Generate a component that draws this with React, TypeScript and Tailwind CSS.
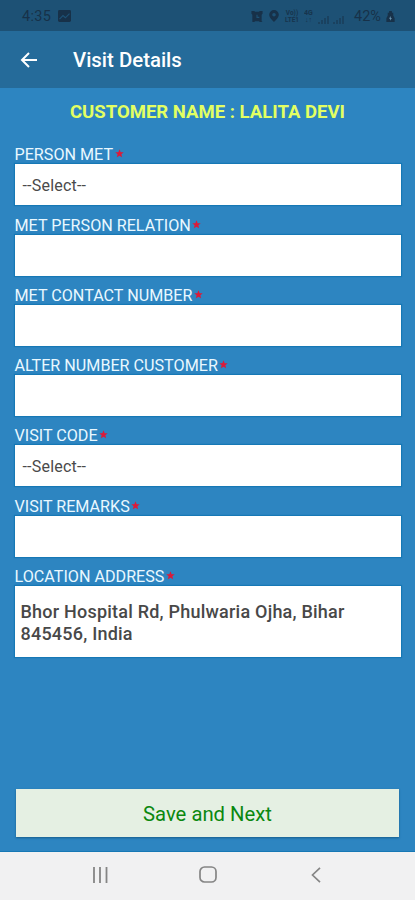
import React from 'react';

interface FieldProps {
  label: string;
  value?: string;
}

const FIELDS: FieldProps[] = [
  { label: 'PERSON MET', value: '--Select--' },
  { label: 'MET PERSON RELATION' },
  { label: 'MET CONTACT NUMBER' },
  { label: 'ALTER NUMBER CUSTOMER' },
  { label: 'VISIT CODE', value: '--Select--' },
  { label: 'VISIT REMARKS' },
];

const FieldLabel: React.FC<{ label: string }> = ({ label }) => (
  <div className="flex h-[29.3px] items-end text-[16.15px] leading-[18px] whitespace-nowrap text-[#e9f8ff]">
    <span>{label}</span>
    <svg viewBox="0 0 10 10" className="mb-[6px] ml-[1.5px] h-[9px] w-[9px] fill-[#dc1a38]">
      <path d="M5 .3 6.300 3.500 9.700 3.700 7.100 5.900 7.900 9.200 5 7.400 2.100 9.200 2.900 5.900 .300 3.700 3.700 3.500z" />
    </svg>
  </div>
);

const Field: React.FC<FieldProps> = ({ label, value }) => (
  <div>
    <FieldLabel label={label} />
    <div className="flex h-[41px] items-center bg-white pt-[2px] pl-2 text-[16px] tracking-[0.2px] text-[#4a4a4a] shadow-[0_0_1px_1px_#1678b5]">
      {value}
    </div>
  </div>
);

const StatusBar = () => (
  <div className="flex h-[31px] shrink-0 items-center bg-[#1d5175] pt-[2px] pr-[20px] pl-[22px] text-[#173149]">
    <span className="w-[30px] pt-[2px] text-[14.5px] leading-none tracking-[0.3px]">4:35</span>
    <svg viewBox="0 0 13 13" className="-mt-px ml-[6px] h-[12px] w-[13px]" preserveAspectRatio="none">
      <rect width="13" height="13" rx="1.5" fill="currentColor" />
      <path d="M1.5 10 5 6l2.4 2.4L11.5 4" fill="none" stroke="#1d5175" strokeWidth="1.2" />
    </svg>

    <div className="ml-auto flex items-center">
      {/* Alarm */}
      <svg viewBox="0 0 14 14" className="-mt-px h-[13px] w-[14px]">
        <path d="M1 1h3l1 1h4l1-1h3v3l-1 1v7l1 1h-3l-1-1H5l-1 1H2V5L1 4z" fill="currentColor" />
        <path d="M7 5v3h2.500" fill="none" stroke="#1d5175" strokeWidth="1.2" />
      </svg>
      {/* Location */}
      <svg viewBox="0 0 10 12" className="-mt-px ml-[5px] h-[12px] w-[10px]">
        <path
          fillRule="evenodd"
          d="M5 0a4.8 4.8 0 0 0-4.8 4.8C.2 8 5 12 5 12s4.8-4 4.8-7.2A4.8 4.8 0 0 0 5 0zm0 3a1.8 1.8 0 1 1 0 3.6A1.8 1.8 0 0 1 5 3z"
          fill="currentColor"
        />
      </svg>
      <div className="ml-[5px] w-[16px] text-center text-[6.5px] leading-[6.5px] font-bold opacity-90">
        <div>Vo))</div>
        <div>LTE1</div>
      </div>
      <div className="ml-[3px] w-[11px] text-center text-[7px] leading-[6.5px] font-bold opacity-90">
        <div>4G</div>
        <div>↓↑</div>
      </div>
      <svg viewBox="0 0 28 9" className="mt-[5px] ml-[4px] h-[9px] w-[28px] opacity-70">
        <path
          d="M1 9V7M4 9V5M7 9V3M10 9V1M16 9V7M19 9V5M22 9V3M25 9V1"
          stroke="currentColor"
          strokeWidth="1.3"
        />
      </svg>
      <span className="ml-[8px] w-[28px] pt-[2px] text-[14.5px] leading-none">42%</span>
      {/* Battery */}
      <svg viewBox="0 0 9 12" className="ml-[4px] h-[11px] w-[9px]">
        <path d="M3 0h3v2h1.5v3L9 8v4H0V8l1.5-3V2H3z" fill="currentColor" />
        <path d="M4.5 5.5 3 8.5h1.2L4 10.5l2-3H4.8z" fill="#6d98b4" />
      </svg>
    </div>
  </div>
);

const AppBar = () => (
  <div className="flex h-[57px] shrink-0 items-center bg-[#256b9a] pl-[20px] text-white">
    <svg viewBox="0 0 18 16" className="h-[16px] w-[18px]" fill="none" stroke="currentColor" strokeWidth="2">
      <path d="M17 8H2M9 1 2 8l7 7" />
    </svg>
    <h1 className="ml-[35px] text-[20.4px] leading-6 font-medium">Visit Details</h1>
  </div>
);

const NavBar = () => (
  <div className="flex h-[48px] shrink-0 items-center bg-[#f1f1f2] pb-[3px] text-[#858585]">
    <svg viewBox="0 0 16 16" className="ml-[92px] h-[16px] w-[16px]" fill="none" stroke="currentColor" strokeWidth="1.8">
      <path d="M2 0v16M8 0v16M14.5 0v16" />
    </svg>
    <svg viewBox="0 0 18 17" className="ml-[91px] h-[17px] w-[18px]" fill="none" stroke="currentColor" strokeWidth="1.7">
      <rect x="1" y="1" width="16" height="15" rx="4.5" />
    </svg>
    <svg viewBox="0 0 10 16" className="ml-[94px] h-[16px] w-[10px]" fill="none" stroke="currentColor" strokeWidth="1.7">
      <path d="M9 .8 1.5 8 9 15.2" />
    </svg>
  </div>
);

export default function App() {
  return (
    <div className="flex h-[900px] w-[415px] flex-col overflow-hidden bg-[#2d85c1] font-['Roboto',sans-serif]">
      <StatusBar />
      <AppBar />

      <main className="flex min-h-0 flex-1 flex-col border-b border-[#1678b5] px-[14.5px] pb-[14px]">
        <h2 className="h-[47px] pt-[12px] text-center text-[18.55px] leading-6 font-bold whitespace-nowrap text-[#e2ff62]">
          CUSTOMER NAME : LALITA DEVI
        </h2>

        {FIELDS.map(field => (
          <Field key={field.label} {...field} />
        ))}

        {/* Address */}
        <FieldLabel label="LOCATION ADDRESS" />
        <div className="h-[71px] bg-white pt-[15px] pl-[6px] text-[18px] leading-[22px] font-medium tracking-[0.22px] text-[#484848] shadow-[0_0_1px_1px_#1678b5]">
          Bhor Hospital Rd, Phulwaria Ojha, Bihar
          <br />
          845456, India
        </div>

        <button
          type="button"
          className="mx-[1.5px] mt-auto h-[48px] shrink-0 bg-[#e5f0e3] pt-[3px] text-[20.3px] text-[#0b880f] shadow-[0_1px_2px_#175f8d]"
        >
          Save and Next
        </button>
      </main>

      <NavBar />
    </div>
  );
}
